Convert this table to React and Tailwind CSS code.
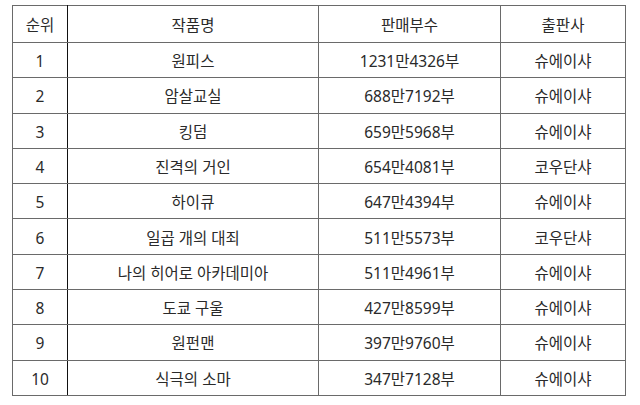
import React from "react";

const rows = [
  ["1", "원피스", "1231만4326부", "슈에이샤"],
  ["2", "암살교실", "688만7192부", "슈에이샤"],
  ["3", "킹덤", "659만5968부", "슈에이샤"],
  ["4", "진격의 거인", "654만4081부", "코우단샤"],
  ["5", "하이큐", "647만4394부", "슈에이샤"],
  ["6", "일곱 개의 대죄", "511만5573부", "코우단샤"],
  ["7", "나의 히어로 아카데미아", "511만4961부", "슈에이샤"],
  ["8", "도쿄 구울", "427만8599부", "슈에이샤"],
  ["9", "원펀맨", "397만9760부", "슈에이샤"],
  ["10", "식극의 소마", "347만7128부", "슈에이샤"],
];

const cell = "border border-[#6a6a6a] text-center align-middle p-0 pt-[3px]";
const first = "border border-[#6a6a6a] border-r-[#111] text-center align-middle p-0 pt-[3px]";

export default function App() {
  return (
    <div
      className="w-[640px] h-[405px] bg-white pt-[5px] pl-[12px] text-[15.5px] text-[#2a2a2a]"
      style={{ fontFamily: '"Noto Sans", "Noto Sans CJK KR", sans-serif' }}
    >
      <table className="border-collapse table-fixed w-[613px]">
        <colgroup>
          <col className="w-[55px]" />
          <col className="w-[251px]" />
          <col className="w-[182px]" />
          <col className="w-[125px]" />
        </colgroup>
        <thead>
          <tr className="h-[37px]">
            <th className={first + " font-normal"}>순위</th>
            <th className={cell + " font-normal"}>작품명</th>
            <th className={cell + " font-normal"}>판매부수</th>
            <th className={cell + " font-normal"}>출판사</th>
          </tr>
        </thead>
        <tbody>
          {rows.map((r) => (
            <tr key={r[0]} className="h-[35.3px]">
              <td className={first}>{r[0]}</td>
              <td className={cell}>{r[1]}</td>
              <td className={cell}>{r[2]}</td>
              <td className={cell}>{r[3]}</td>
            </tr>
          ))}
        </tbody>
      </table>
    </div>
  );
}
